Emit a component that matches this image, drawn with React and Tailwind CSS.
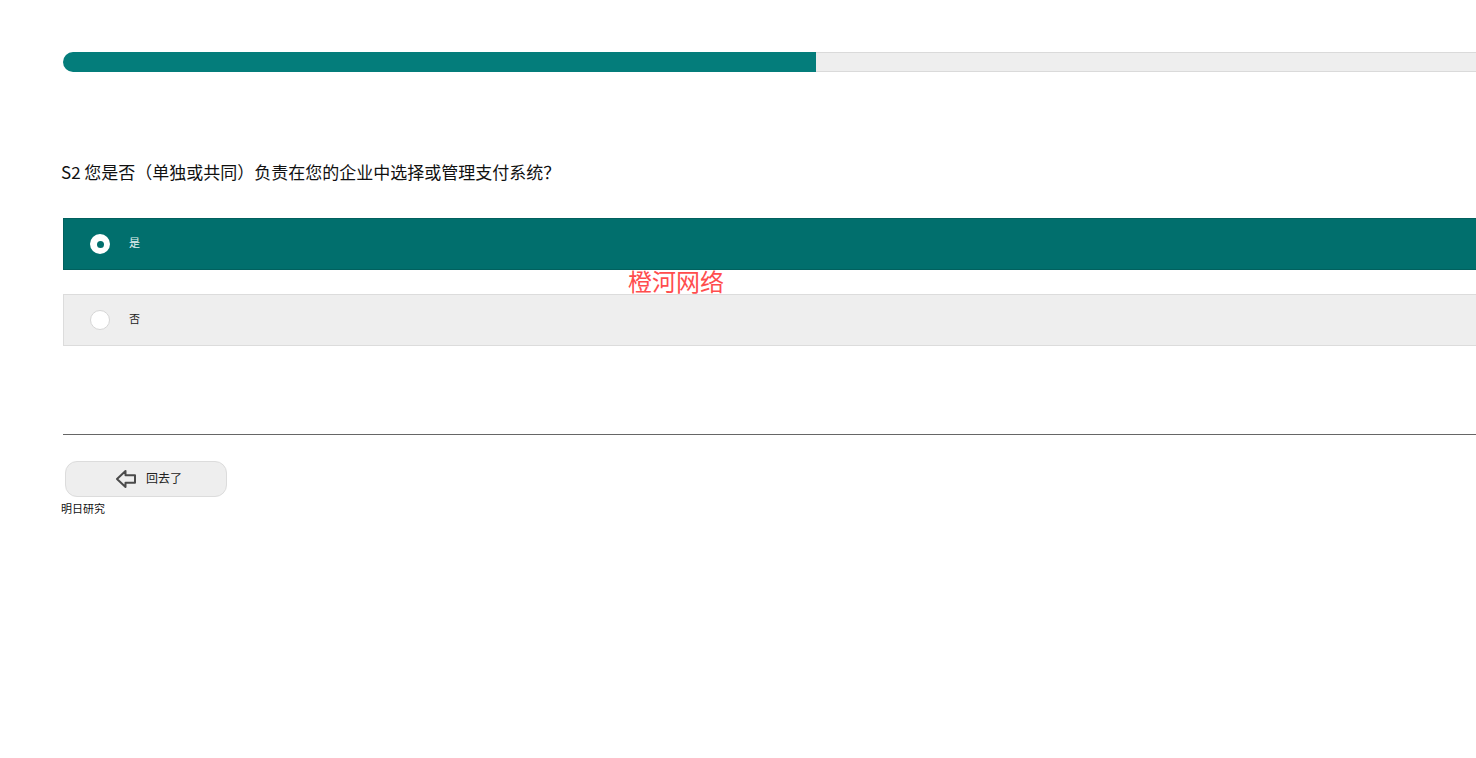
import React from "react";

const font = { fontFamily: '"Noto Sans CJK SC", "Noto Sans", sans-serif' };

function BackArrow() {
  return (
    <svg width="22" height="20" viewBox="0 0 22 20" fill="none">
      <path
        d="M2 10 L10.5 2 L10.5 6.2 L20 6.2 L20 13.8 L10.5 13.8 L10.5 18 Z"
        stroke="#4a4a4a"
        strokeWidth="2"
        strokeLinejoin="round"
      />
    </svg>
  );
}

function Option({ label, selected }) {
  return (
    <div
      className={`flex items-center h-[52px] pl-[26px] border ${
        selected ? "bg-[#016f6d] border-[#01605e]" : "bg-[#eeeeee] border-[#dcdcdc]"
      }`}
    >
      {selected ? (
        <span className="w-[20px] h-[20px] rounded-full bg-white flex items-center justify-center">
          <span className="w-[7px] h-[7px] rounded-full bg-[#016f6d]" />
        </span>
      ) : (
        <span className="w-[20px] h-[20px] rounded-full bg-white border border-[#d6d6d6]" />
      )}
      <span className={`ml-[19px] mb-[3px] text-[11px] ${selected ? "text-[#e6f3f2]" : "text-[#222]"}`}>{label}</span>
    </div>
  );
}

export default function App() {
  return (
    <div className="w-full min-h-[758px] bg-white overflow-hidden" style={font}>
      <div className="ml-[63px] w-[1480px] pt-[52px]">
        {/* progress */}
        <div className="flex h-[20px]">
          <div className="w-[753px] bg-[#047d7b] rounded-l-full" />
          <div className="flex-1 bg-[#eeeeee] border-y border-[#dadada]" />
        </div>

        <div className="mt-[88px] -ml-[2px] text-[17px] text-[#111] leading-[24px]">
          S2 您是否（单独或共同）负责在您的企业中选择或管理支付系统？
        </div>

        <div className="mt-[34px]">
          <Option label="是" selected />
          <div className="h-[24px] flex justify-start">
            <span className="ml-[565px] text-[24px] leading-[26px] text-[#ff4d4d] -mt-[2px]">橙河网络</span>
          </div>
          <Option label="否" />
        </div>

        <div className="mt-[88px] h-px bg-[#666]" />

        <div className="mt-[26px] ml-[2px] w-[162px] h-[36px] rounded-[12px] bg-[#eeeeee] border border-[#dcdcdc] flex items-center justify-center gap-[9px] pl-[5px]">
          <BackArrow />
          <span className="text-[12px] text-[#222] mb-[2px]">回去了</span>
        </div>
        <div className="-ml-[2px] mt-[3px] text-[11px] text-[#111]">明日研究</div>
      </div>
    </div>
  );
}
